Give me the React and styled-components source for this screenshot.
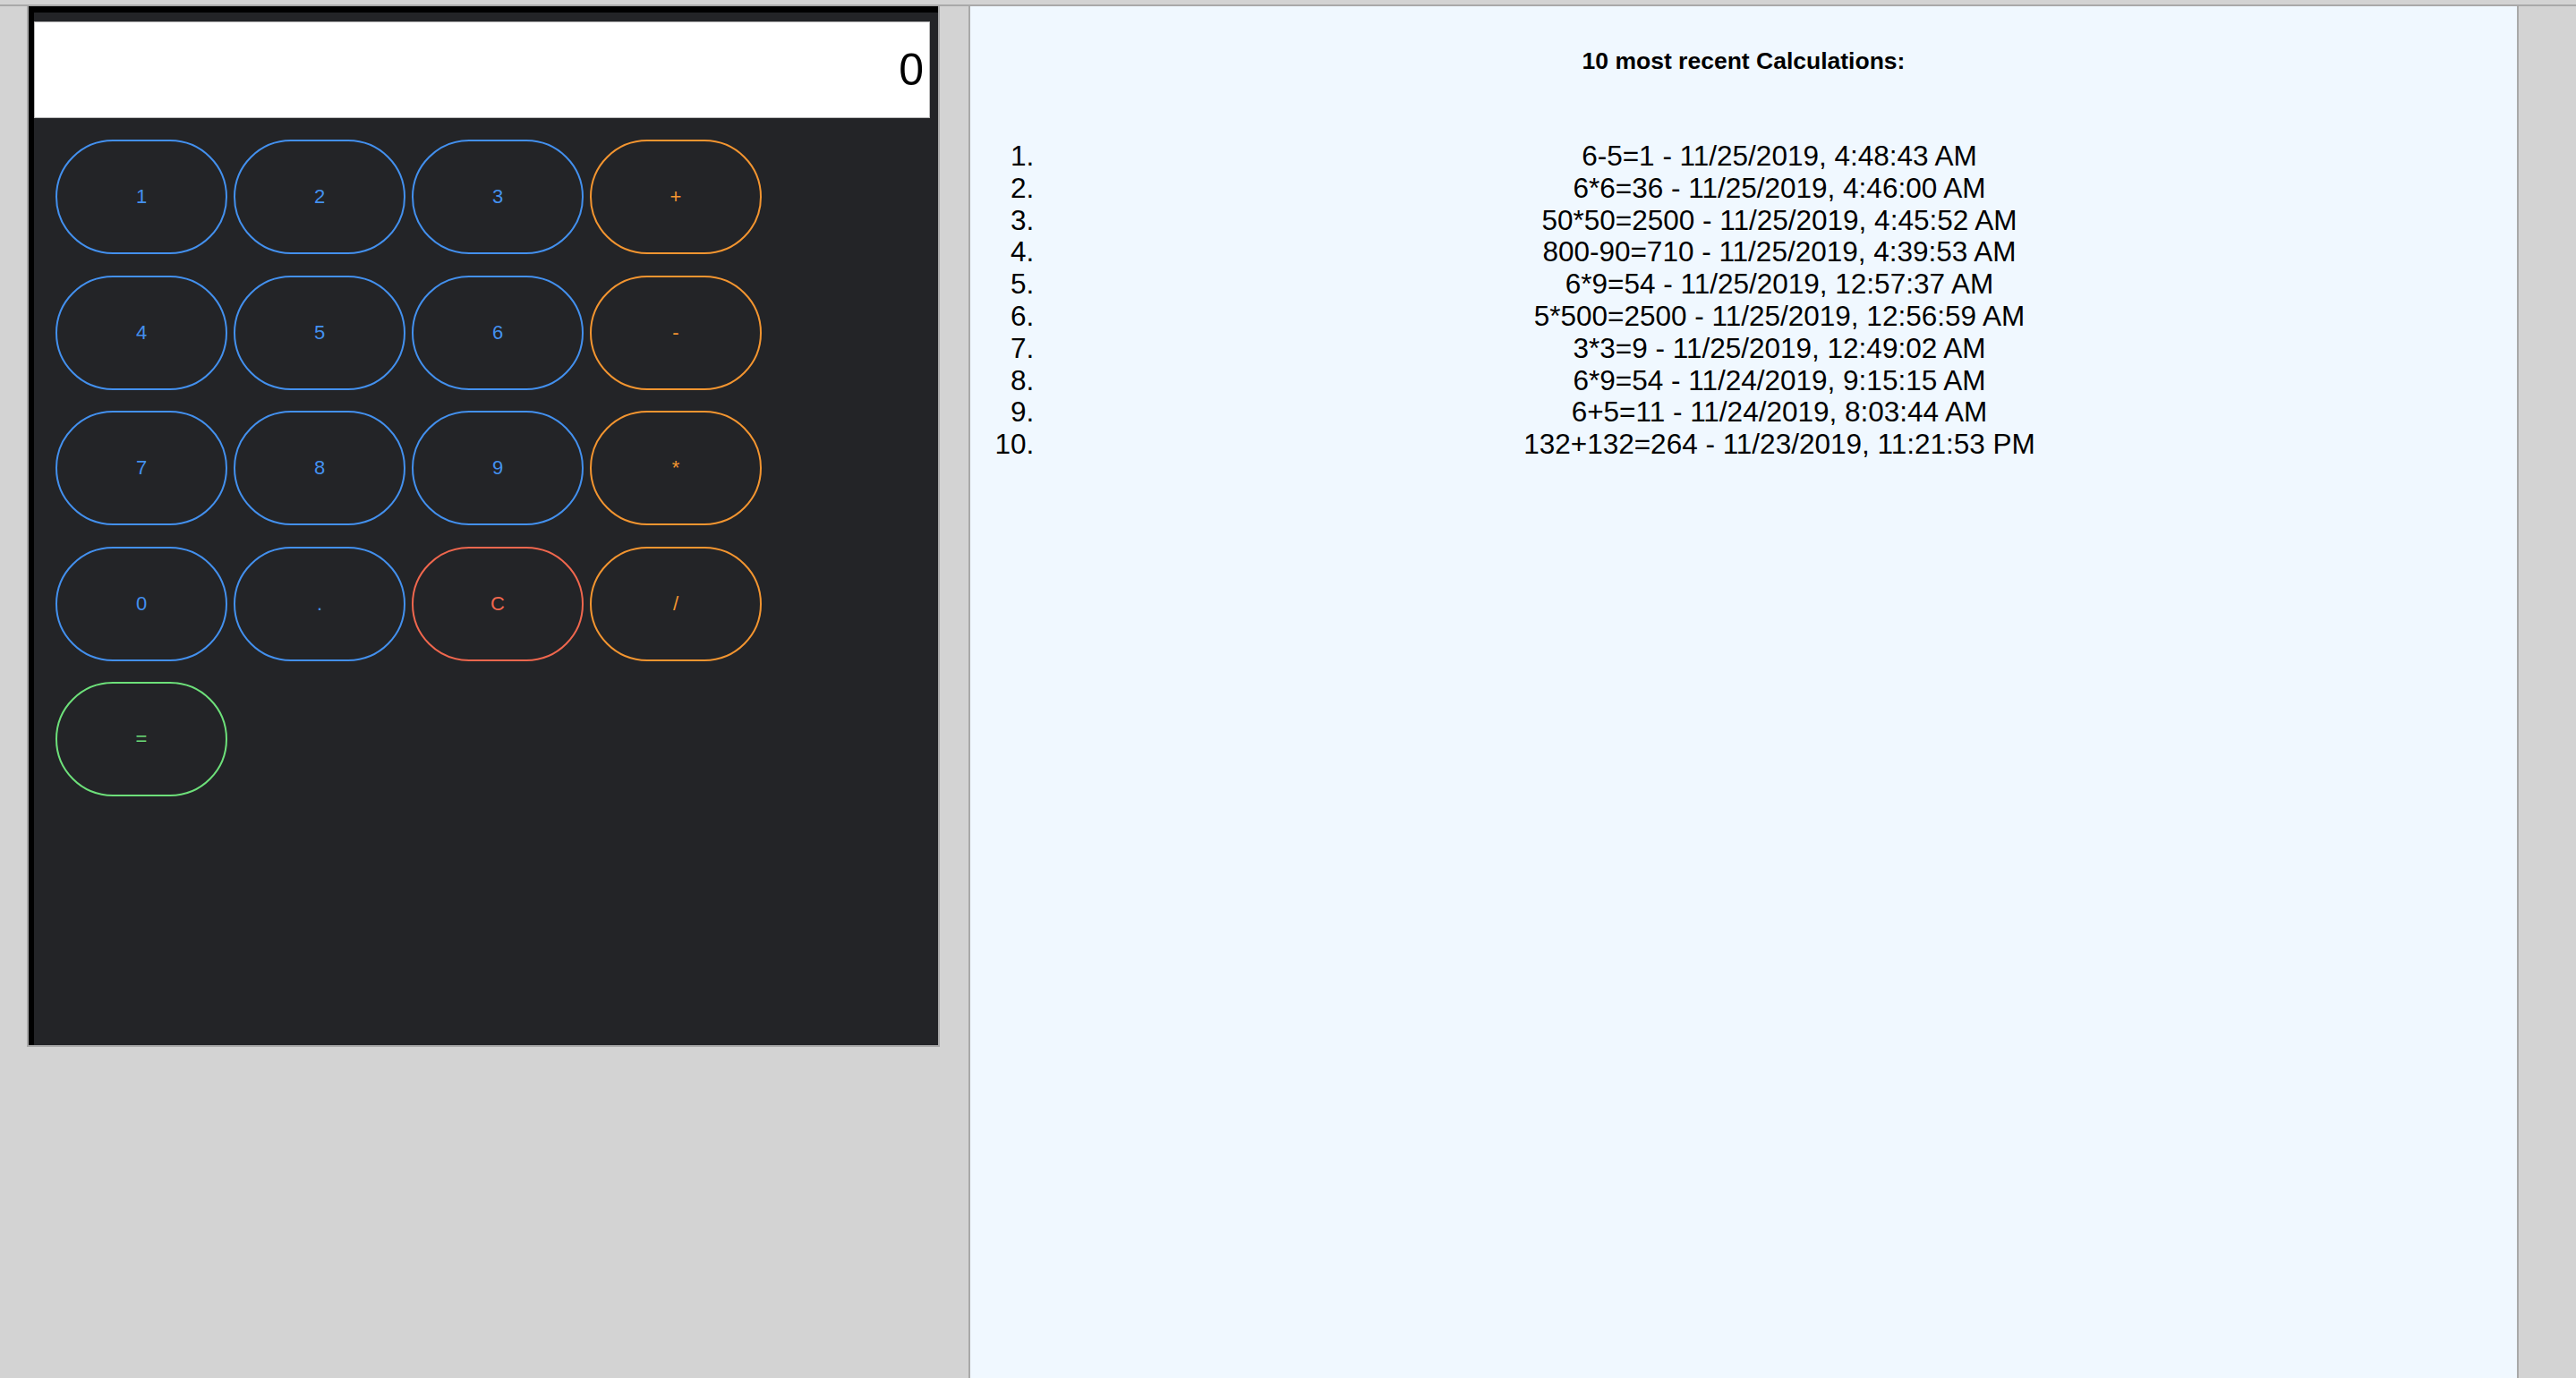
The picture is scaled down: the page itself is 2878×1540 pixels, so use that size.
import React from "react";
import styled, { createGlobalStyle } from "styled-components";

const GlobalStyle = createGlobalStyle`
  body {
    margin: 0;
    background: #d3d3d3;
    font-family: "Liberation Sans", Arial, sans-serif;
    overflow: hidden;
  }
`;

const Page = styled.div`
  display: flex;
  align-items: flex-start;
  margin-top: 5px;
  border-top: 2px solid #a9a9a9;
  height: 1533px;
`;

const CalcShell = styled.div`
  margin-left: 30px;
  width: 1020px;
  box-sizing: border-box;
  border: 2px solid #a9a9a9;
  border-top: none;
`;

const CalcBody = styled.div`
  height: 1161px;
  box-sizing: border-box;
  border-top: 7px solid #000;
  border-left: 6px solid #000;
  background: #232427;
  padding-top: 10px;
`;

const Display = styled.div`
  height: 108px;
  box-sizing: border-box;
  margin-right: 9px;
  border: 1px solid #bbbbbb;
  background: #fff;
  display: flex;
  align-items: center;
  justify-content: flex-end;
  padding-right: 6px;
  font-size: 50px;
  color: #000;
`;

const Keypad = styled.div`
  display: grid;
  grid-template-columns: repeat(4, 192px);
  grid-auto-rows: 128px;
  column-gap: 7px;
  row-gap: 23.5px;
  padding: 24px 0 0 24px;
`;

const Key = styled.button`
  box-sizing: border-box;
  background: transparent;
  border: 2px solid ${(p) => p.$tone};
  color: ${(p) => p.$tone};
  border-radius: 64px;
  font-family: "Liberation Sans", Arial, sans-serif;
  font-size: 22px;
  padding: 0;
  cursor: pointer;
`;

const History = styled.div`
  margin-left: 32px;
  width: 1732px;
  height: 100%;
  box-sizing: border-box;
  border-left: 2px solid #a9a9a9;
  border-right: 2px solid #a9a9a9;
  background: #f0f8ff;
  padding-top: 46px;
  color: #000;
`;

const Heading = styled.h6`
  margin: 0;
  text-align: center;
  font-size: 26.5px;
  line-height: 30px;
  font-weight: bold;
`;

const List = styled.ol`
  margin: 74px 0 0;
  padding-left: 80px;
  font-size: 31.5px;
  line-height: 35.8px;
`;

const Item = styled.li`
  text-align: center;
`;

const BLUE = "#4390ee";
const ORANGE = "#f39530";
const RED = "#f0674e";
const GREEN = "#6de07a";

const keys = [
  ["1", BLUE], ["2", BLUE], ["3", BLUE], ["+", ORANGE],
  ["4", BLUE], ["5", BLUE], ["6", BLUE], ["-", ORANGE],
  ["7", BLUE], ["8", BLUE], ["9", BLUE], ["*", ORANGE],
  ["0", BLUE], [".", BLUE], ["C", RED], ["/", ORANGE],
  ["=", GREEN],
];

const calculations = [
  "6-5=1 - 11/25/2019, 4:48:43 AM",
  "6*6=36 - 11/25/2019, 4:46:00 AM",
  "50*50=2500 - 11/25/2019, 4:45:52 AM",
  "800-90=710 - 11/25/2019, 4:39:53 AM",
  "6*9=54 - 11/25/2019, 12:57:37 AM",
  "5*500=2500 - 11/25/2019, 12:56:59 AM",
  "3*3=9 - 11/25/2019, 12:49:02 AM",
  "6*9=54 - 11/24/2019, 9:15:15 AM",
  "6+5=11 - 11/24/2019, 8:03:44 AM",
  "132+132=264 - 11/23/2019, 11:21:53 PM",
];

const App = () => {
  return (
    <>
      <GlobalStyle />
      <Page>
        <CalcShell>
          <CalcBody>
            <Display>0</Display>
            <Keypad>
              {keys.map(([label, tone]) => (
                <Key key={label} $tone={tone}>
                  {label}
                </Key>
              ))}
            </Keypad>
          </CalcBody>
        </CalcShell>
        <History>
          <Heading>10 most recent Calculations:</Heading>
          <List>
            {calculations.map((calc, i) => (
              <Item key={i}>{calc}</Item>
            ))}
          </List>
        </History>
      </Page>
    </>
  );
};

export default App;
